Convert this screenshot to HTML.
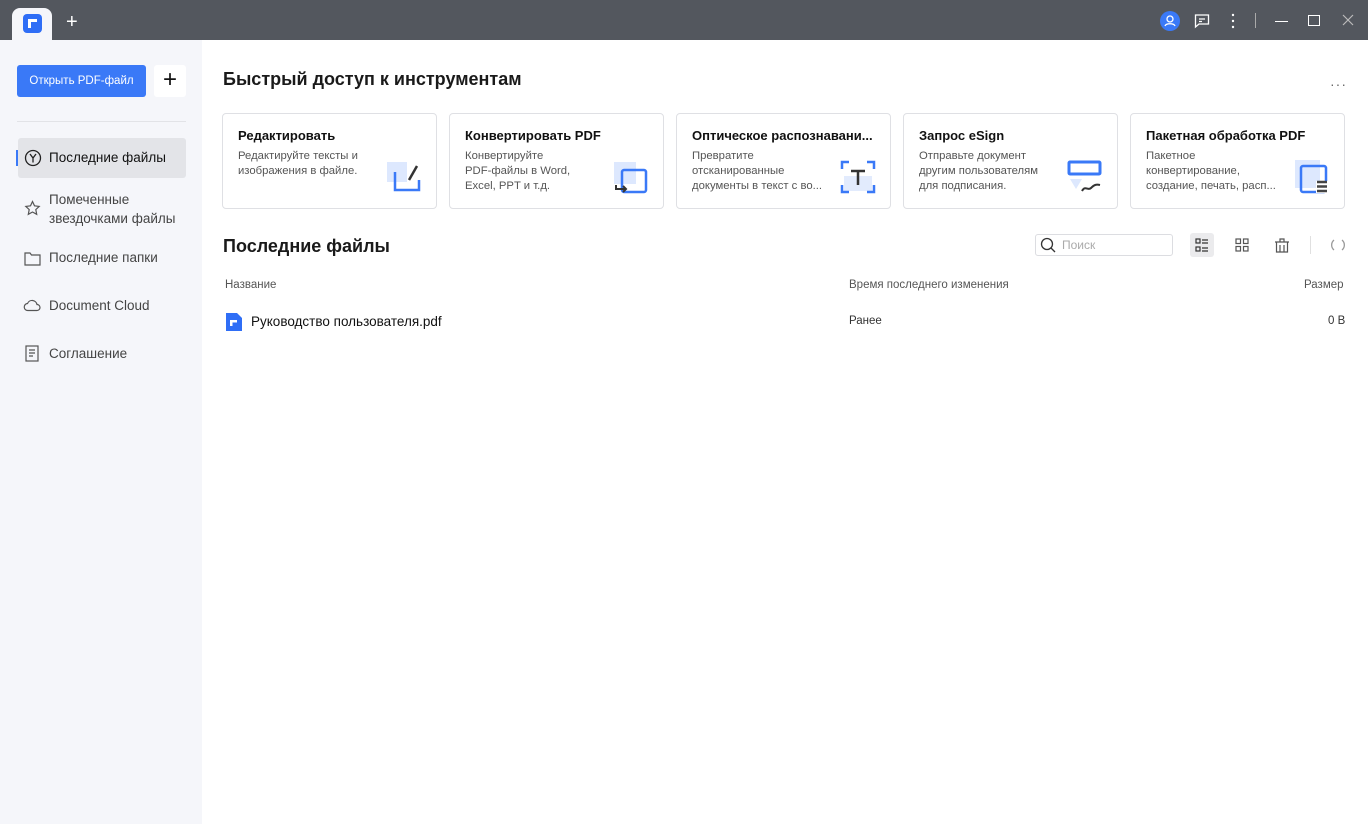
<!DOCTYPE html>
<html><head><meta charset="utf-8"><style>
*{margin:0;padding:0;box-sizing:border-box}
body{width:1368px;height:824px;overflow:hidden;font-family:"Liberation Sans","Noto Sans CJK SC",sans-serif;background:#fff;position:relative;color:#1d1d1f}
.tb{position:absolute;left:0;top:0;width:1368px;height:40px;background:#53575e}
.tab{position:absolute;left:12px;top:8px;width:40px;height:32px;background:#f5f6fa;border-radius:8px 8px 0 0}
.side{position:absolute;left:0;top:40px;width:202px;height:784px;background:#f5f6fa}
.abs{position:absolute}
.btn{position:absolute;left:17px;top:65px;width:129px;height:32px;background:#3a79f7;border-radius:3px;color:#fff;font-size:11.5px;line-height:32px;text-align:center}
.plus{position:absolute;left:154px;top:65px;width:32px;height:32px;background:#fff;border-radius:3px;font-size:24px;line-height:30px;text-align:center;color:#111}
.nav{position:absolute;left:49px;font-size:13.5px;color:#333}
.card{position:absolute;top:113px;width:215px;height:96px;border:1px solid #dfe0e4;border-radius:4px;background:#fff}
.card b{position:absolute;left:15px;top:14px;font-size:13px;font-weight:bold;color:#111;white-space:nowrap;max-width:190px;overflow:hidden}
.card p{position:absolute;left:15px;top:35px;font-size:11.3px;line-height:15px;color:#555;width:130px}
.card svg{position:absolute;right:14px;top:45px}
.h{position:absolute;font-size:18px;font-weight:bold;color:#1a1a1a}
.th{position:absolute;top:279px;font-size:11.5px;color:#555}
</style></head><body>
<div class="tb"></div>
<div class="tab"></div>
<div class="abs" style="left:23px;top:14px;width:19px;height:19px;background:#2f6ef6;border-radius:4px"></div>
<div class="abs" style="left:28px;top:19px;width:9px;height:3px;background:#fff"></div>
<div class="abs" style="left:28px;top:19px;width:3px;height:9px;background:#fff"></div>
<div class="abs" style="left:66px;top:11px;color:#fff;font-size:20px">+</div>
<div class="abs" style="left:1160px;top:11px;width:20px;height:20px;border-radius:50%;background:#3a79f7"></div>
<svg class="abs" style="left:1160px;top:11px" width="20" height="20"><circle cx="10" cy="8" r="3" fill="none" stroke="#fff" stroke-width="1.3"/><path d="M5 15c1-3 9-3 10 0" fill="none" stroke="#fff" stroke-width="1.3"/></svg>
<svg class="abs" style="left:1194px;top:13px" width="16" height="16" fill="none" stroke="#fff" stroke-width="1.3"><path d="M1.5 2h13v9H5l-3.5 3z"/><path d="M5 6h6M5 8.5h3"/></svg>
<svg class="abs" style="left:1230px;top:13px" width="6" height="16" fill="#fff"><circle cx="3" cy="2" r="1.2"/><circle cx="3" cy="8" r="1.2"/><circle cx="3" cy="14" r="1.2"/></svg>
<div class="abs" style="left:1255px;top:13px;width:1px;height:15px;background:#aaa"></div>
<div class="abs" style="left:1275px;top:21px;width:13px;height:1px;background:#fff"></div>
<div class="abs" style="left:1308px;top:15px;width:12px;height:11px;border:1.3px solid #fff"></div>
<svg class="abs" style="left:1342px;top:14px" width="12" height="12" stroke="#bbb" stroke-width="1.2"><path d="M1 1l10 10M11 1L1 11"/></svg>

<div class="side"></div>
<div class="btn">Открыть PDF-файл</div>
<div class="plus">+</div>
<div class="abs" style="left:17px;top:121px;width:169px;height:1px;background:#e2e3e7"></div>
<div class="abs" style="left:18px;top:138px;width:168px;height:40px;background:#e3e4e8;border-radius:3px"></div>
<div class="abs" style="left:16px;top:150px;width:2px;height:16px;background:#3a79f7"></div>
<svg class="abs" style="left:24px;top:149px" width="18" height="18" fill="none" stroke="#222" stroke-width="1.3"><circle cx="9" cy="9" r="7.5"/><path d="M6 5l3 4 3-4M9 9v4.5"/></svg>
<div class="nav" style="top:150px;color:#111">Последние файлы</div>
<svg class="abs" style="left:24px;top:200px" width="17" height="17" fill="none" stroke="#555" stroke-width="1.2"><path d="M8.5 1.5l2 4.3 4.7.6-3.4 3.2.9 4.7-4.2-2.3-4.2 2.3.9-4.7L1.8 6.4l4.7-.6z"/></svg>
<div class="nav" style="top:190px;line-height:19px;color:#444">Помеченные<br>звездочками файлы</div>
<svg class="abs" style="left:24px;top:251px" width="17" height="15" fill="none" stroke="#555" stroke-width="1.2"><path d="M1 2h5l1.5 2H16v10H1z"/></svg>
<div class="nav" style="top:250px;color:#444">Последние папки</div>
<svg class="abs" style="left:23px;top:298px" width="18" height="14" fill="none" stroke="#555" stroke-width="1.2"><path d="M5 12.5h9a3 3 0 0 0 0-6 5 5 0 0 0-9.5-1A3.3 3.3 0 0 0 5 12.5z"/></svg>
<div class="nav" style="top:298px;color:#444">Document Cloud</div>
<svg class="abs" style="left:25px;top:345px" width="14" height="17" fill="none" stroke="#555" stroke-width="1.2"><rect x="1" y="1" width="12" height="15"/><path d="M4 5h6M4 8h6M4 11h4"/></svg>
<div class="nav" style="top:346px;color:#444">Соглашение</div>

<div class="h" style="left:223px;top:69px">Быстрый доступ к инструментам</div>
<div class="abs" style="left:1330px;top:76px;color:#666;font-size:14px;letter-spacing:1px">···</div>

<div class="card" style="left:222px"><b>Редактировать</b><p>Редактируйте тексты и изображения в файле.</p>
<svg width="36" height="36"><rect x="1" y="3" width="20" height="20" fill="#dde8fe"/><path d="M9 13v18h24V21" fill="none" stroke="#3a79f7" stroke-width="2.5"/><path d="M23 21l8-14" stroke="#333" stroke-width="2.5"/></svg></div>
<div class="card" style="left:449px"><b>Конвертировать PDF</b><p style="width:118px">Конвертируйте<br>PDF-файлы в Word, Excel, PPT и т.д.</p>
<svg width="36" height="36"><rect x="1" y="3" width="22" height="22" fill="#dde8fe"/><rect x="9" y="11" width="24" height="22" rx="2" fill="none" stroke="#3a79f7" stroke-width="2.5"/><path d="M3 26v4h10M10 27l3 3-3 3" fill="none" stroke="#333" stroke-width="2"/></svg></div>
<div class="card" style="left:676px"><b>Оптическое распознавани...</b><p style="width:140px">Превратите<br>отсканированные<br>документы в текст с во...</p>
<svg width="36" height="36"><rect x="4" y="17" width="28" height="15" fill="#e2ebfd"/><path d="M2 10V3h7M27 3h7v7M34 26v7h-7M9 33H2v-7" fill="none" stroke="#3a79f7" stroke-width="2.5"/><path d="M11 12h14M18 12v14" stroke="#333" stroke-width="2.5"/></svg></div>
<div class="card" style="left:903px"><b>Запрос eSign</b><p style="width:130px">Отправьте документ<br>другим пользователям<br>для подписания.</p>
<svg width="36" height="36"><rect x="2" y="3" width="31" height="12" rx="1" fill="#fff" stroke="#3a79f7" stroke-width="3"/><path d="M3 20h12l-6 10z" fill="#dde8fe"/><path d="M15 32c3-6 6 0 9-3s5-4 9-3" fill="none" stroke="#333" stroke-width="2"/></svg></div>
<div class="card" style="left:1130px"><b>Пакетная обработка PDF</b><p style="width:140px">Пакетное<br>конвертирование,<br>создание, печать, расп...</p>
<svg width="36" height="36"><rect x="1" y="1" width="25" height="28" fill="#dde8fe"/><rect x="7" y="7" width="25" height="26" rx="2" fill="none" stroke="#3a79f7" stroke-width="2.5"/><rect x="22" y="22" width="12" height="12" fill="#fff"/><path d="M23 23h10M23 27.5h10M23 32h10" stroke="#444" stroke-width="2.5"/></svg></div>

<div class="h" style="left:223px;top:236px">Последние файлы</div>
<div class="abs" style="left:1035px;top:234px;width:138px;height:22px;border:1px solid #dcdde1;border-radius:3px"></div>
<svg class="abs" style="left:1040px;top:237px" width="16" height="16" fill="none" stroke="#333" stroke-width="1.3"><circle cx="7" cy="7" r="5.5"/><path d="M11 11l4 4"/></svg>
<div class="abs" style="left:1062px;top:238px;font-size:12px;color:#aaa">Поиск</div>
<div class="abs" style="left:1190px;top:233px;width:24px;height:24px;background:#ebebed;border-radius:3px"></div>
<svg class="abs" style="left:1195px;top:238px" width="14" height="14" fill="none" stroke="#333" stroke-width="1.2"><rect x="1" y="1" width="4" height="4"/><rect x="1" y="9" width="4" height="4"/><path d="M7 2h6M7 5h6M7 10h6M7 13h6"/></svg>
<svg class="abs" style="left:1235px;top:238px" width="14" height="14" fill="none" stroke="#555" stroke-width="1.2"><rect x="1" y="1" width="4.5" height="4.5"/><rect x="8.5" y="1" width="4.5" height="4.5"/><rect x="1" y="8.5" width="4.5" height="4.5"/><rect x="8.5" y="8.5" width="4.5" height="4.5"/></svg>
<svg class="abs" style="left:1274px;top:237px" width="16" height="16" fill="none" stroke="#555" stroke-width="1.2"><path d="M1 5h14M6 5V2h4v3M2.5 5v10h11V5M6 8v7M10 8v7"/></svg>
<div class="abs" style="left:1310px;top:236px;width:1px;height:18px;background:#e0e0e0"></div>
<svg class="abs" style="left:1330px;top:237px" width="16" height="16" fill="none" stroke="#999" stroke-width="1.3"><path d="M4 3a6.5 6.5 0 0 0 0 10M12 3a6.5 6.5 0 0 1 0 10"/></svg>

<div class="th" style="left:225px">Название</div>
<div class="th" style="left:849px">Время последнего изменения</div>
<div class="th" style="left:1304px">Размер</div>
<svg class="abs" style="left:226px;top:313px" width="16" height="18"><path d="M0 0h11l5 5v13H0z" fill="#2f6ef6"/><path d="M4 7h7v2.5H6.5V13H4z" fill="#fff"/></svg>
<div class="abs" style="left:251px;top:314px;font-size:13.5px;color:#111">Руководство пользователя.pdf</div>
<div class="abs" style="left:849px;top:315px;font-size:11.5px;color:#333">Ранее</div>
<div class="abs" style="left:1328px;top:315px;font-size:11.5px;color:#333">0 B</div>
</body></html>
